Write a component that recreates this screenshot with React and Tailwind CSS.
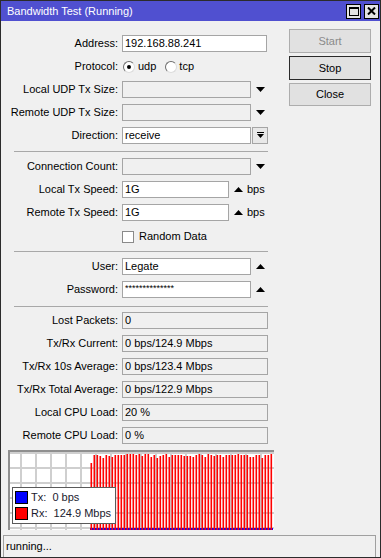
import React from 'react';

const Tri = ({ up }) => (
  <svg width="9" height="5" viewBox="0 0 9 5" className="shrink-0">
    <polygon points={up ? '4.5,0 9,5 0,5' : '0,0 9,0 4.5,5'} fill="#000" />
  </svg>
);

const Box = ({ value, className }) => (
  <div className={`h-[17px] border border-[#a5a5a5] pl-[2px] flex items-center whitespace-nowrap leading-none ${className}`}>
    {value}
  </div>
);

const Row = ({ label, children, className = '' }) => (
  <div className={`flex items-center h-[17px] shrink-0 ${className}`}>
    <div className="w-[117px] text-right whitespace-nowrap leading-none">{label}</div>
    <div className="ml-[4px] flex items-center">{children}</div>
  </div>
);

const Sep = ({ className }) => <div className={`ml-[13px] w-[254px] h-px bg-[#a8a8a8] shrink-0 ${className}`} />;

const Radio = ({ on }) => (
  <span className="w-[12px] h-[12px] rounded-full bg-white border border-t-[#6d6d6d] border-l-[#6d6d6d] border-r-[#dcdcdc] border-b-[#dcdcdc] flex items-center justify-center">
    {on && <span className="w-[4px] h-[4px] rounded-full bg-black" />}
  </span>
);

const tops = [11, 3, 3, 4, 6, 3, 4, 5, 3, 3, 3, 3, 2, 2, 2, 3, 2, 4, 2, 2, 5, 3, 6, 4, 3, 2, 5, 3, 3, 3, 3, 4, 4, 4, 5, 3, 2, 3, 5, 2, 3, 4, 3, 3, 5, 3, 3, 3, 3, 2, 3, 3, 3, 5, 5, 3, 3, 6, 3, 3, 2];

const Chart = () => (
  <div className="relative ml-[7px] mt-[6px] w-[266px] h-[80px] border-t-2 border-l-2 border-[#8f8f8f] bg-white shrink-0">
    <svg width="264" height="78" className="block">
      {Array.from({ length: 17 }, (_, k) => (
        <rect key={'v' + k} x={10 + 15 * k} y="0" width="2" height="78" fill="#cfcfcf" />
      ))}
      {[0, 15, 30, 45, 60, 75].map((y) => (
        <rect key={'h' + y} x="0" y={y} width="264" height="2" fill="#cfcfcf" />
      ))}
      <rect x="80" y="76" width="183" height="2" fill="#0000ff" />
      {tops.map((t, i) => (
        <rect key={i} x={80.5 + 3 * i} y={t} width="1.6" height={78 - t} fill="#ff0000" />
      ))}
    </svg>
    <div className="absolute left-[2px] top-[35px] w-[104px] h-[37px] bg-white border border-[#5a5a5a] flex flex-col justify-center gap-[3px] pl-[2px]">
      <div className="flex items-center h-[13px] leading-none">
        <span className="w-[13px] h-[13px] bg-[#0000ff] border border-black" />
        <span className="ml-[3px] text-[#1a1a2e]">Tx:&nbsp;&nbsp;0 bps</span>
      </div>
      <div className="flex items-center h-[13px] leading-none">
        <span className="w-[13px] h-[13px] bg-[#ff0000] border border-black" />
        <span className="ml-[3px] text-[#1a1a2e]">Rx:&nbsp;&nbsp;124.9 Mbps</span>
      </div>
    </div>
  </div>
);

export default function App() {
  return (
    <div className="w-[381px] h-[558px] bg-[#f0f0f0] border border-[#2b2b2b] flex flex-col font-['Liberation_Sans',Arial,sans-serif] text-[11px] text-black overflow-hidden">
      <div className="h-[20px] bg-[#5050d0] flex items-center pl-[6px] pr-[1px] shrink-0">
        <span className="text-white flex-1 leading-none">Bandwidth Test (Running)</span>
        <div className="flex gap-[3px]">
          <div className="w-[15px] h-[15px] bg-[#e4e4e4] border border-black flex items-center justify-center">
            <svg width="10" height="9" viewBox="0 0 10 9">
              <rect x="0.5" y="0.5" width="9" height="8" fill="none" stroke="#000" />
              <rect x="0" y="0" width="10" height="2" fill="#000" />
            </svg>
          </div>
          <div className="w-[15px] h-[15px] bg-[#e4e4e4] border border-black flex items-center justify-center">
            <svg width="9" height="8" viewBox="0 0 9 8">
              <path d="M1 0.5 L8 7.5 M8 0.5 L1 7.5" stroke="#000" strokeWidth="2" />
            </svg>
          </div>
        </div>
      </div>

      <div className="flex">
        <div className="w-[288px] flex flex-col pt-[14px]">
          <Row label="Address:">
            <Box value="192.168.88.241" className="w-[145px] bg-white" />
          </Row>
          <Row label="Protocol:" className="mt-[6px]">
            <div className="flex items-center ml-px leading-none">
              <Radio on />
              <span className="ml-[3px]">udp</span>
              <span className="ml-[9px]"><Radio /></span>
              <span className="ml-[2px]">tcp</span>
            </div>
          </Row>
          <Row label="Local UDP Tx Size:" className="mt-[6px]">
            <Box value="" className="w-[129px] bg-[#f0f0f0]" />
            <span className="ml-[5px]"><Tri /></span>
          </Row>
          <Row label="Remote UDP Tx Size:" className="mt-[6px]">
            <Box value="" className="w-[129px] bg-[#f0f0f0]" />
            <span className="ml-[5px]"><Tri /></span>
          </Row>
          <Row label="Direction:" className="mt-[6px]">
            <Box value="receive" className="w-[129px] bg-white" />
            <div className="ml-[1px] w-[16px] h-[17px] border border-[#a5a5a5] bg-[#e8e8e8] flex items-center justify-center">
              <svg width="7" height="7" viewBox="0 0 7 7">
                <rect x="0" y="0" width="7" height="1" fill="#000" />
                <polygon points="0,2 7,2 3.5,6" fill="#000" />
              </svg>
            </div>
          </Row>
          <Sep className="mt-[7px]" />
          <Row label="Connection Count:" className="mt-[6px]">
            <Box value="" className="w-[129px] bg-[#f0f0f0]" />
            <span className="ml-[5px]"><Tri /></span>
          </Row>
          <Row label="Local Tx Speed:" className="mt-[6px]">
            <Box value="1G" className="w-[107px] bg-white" />
            <span className="ml-[5px]"><Tri up /></span>
            <span className="ml-[4px] leading-none">bps</span>
          </Row>
          <Row label="Remote Tx Speed:" className="mt-[6px]">
            <Box value="1G" className="w-[107px] bg-white" />
            <span className="ml-[5px]"><Tri up /></span>
            <span className="ml-[4px] leading-none">bps</span>
          </Row>
          <Row label="" className="mt-[7px]">
            <span className="w-[12px] h-[12px] bg-white border border-[#8a8a8a]" />
            <span className="ml-[5px] leading-none">Random Data</span>
          </Row>
          <Sep className="mt-[6px]" />
          <Row label="User:" className="mt-[6px]">
            <Box value="Legate" className="w-[129px] bg-white" />
            <span className="ml-[5px]"><Tri up /></span>
          </Row>
          <Row label="Password:" className="mt-[6px]">
            <Box value="**************" className="w-[129px] bg-white text-[9px] items-start pt-[2px]" />
            <span className="ml-[5px]"><Tri up /></span>
          </Row>
          <Sep className="mt-[8px]" />
          <Row label="Lost Packets:" className="mt-[5px]">
            <Box value="0" className="w-[146px] bg-[#f0f0f0]" />
          </Row>
          <Row label="Tx/Rx Current:" className="mt-[6px]">
            <Box value="0 bps/124.9 Mbps" className="w-[146px] bg-[#f0f0f0]" />
          </Row>
          <Row label="Tx/Rx 10s Average:" className="mt-[6px]">
            <Box value="0 bps/123.4 Mbps" className="w-[146px] bg-[#f0f0f0]" />
          </Row>
          <Row label="Tx/Rx Total Average:" className="mt-[6px]">
            <Box value="0 bps/122.9 Mbps" className="w-[146px] bg-[#f0f0f0]" />
          </Row>
          <Row label="Local CPU Load:" className="mt-[6px]">
            <Box value="20 %" className="w-[146px] bg-[#f0f0f0]" />
          </Row>
          <Row label="Remote CPU Load:" className="mt-[6px]">
            <Box value="0 %" className="w-[146px] bg-[#f0f0f0]" />
          </Row>
          <Chart />
        </div>

        <div className="w-[82px] flex flex-col gap-[3px] pt-[8px]">
          <button className="h-[24px] bg-[#e1e1e1] border border-[#adadad] text-[#8a8a8a] leading-none">Start</button>
          <button className="h-[24px] bg-[#e1e1e1] border border-[#2a2a2a] leading-none">Stop</button>
          <button className="h-[23px] bg-[#e1e1e1] border border-[#adadad] leading-none">Close</button>
        </div>
      </div>

      <div className="mt-auto ml-[2px] mr-[4px] h-[22px] border-t border-l border-r border-[#a0a0a0] flex items-center pl-[2px] leading-none shrink-0">
        running...
      </div>
    </div>
  );
}
